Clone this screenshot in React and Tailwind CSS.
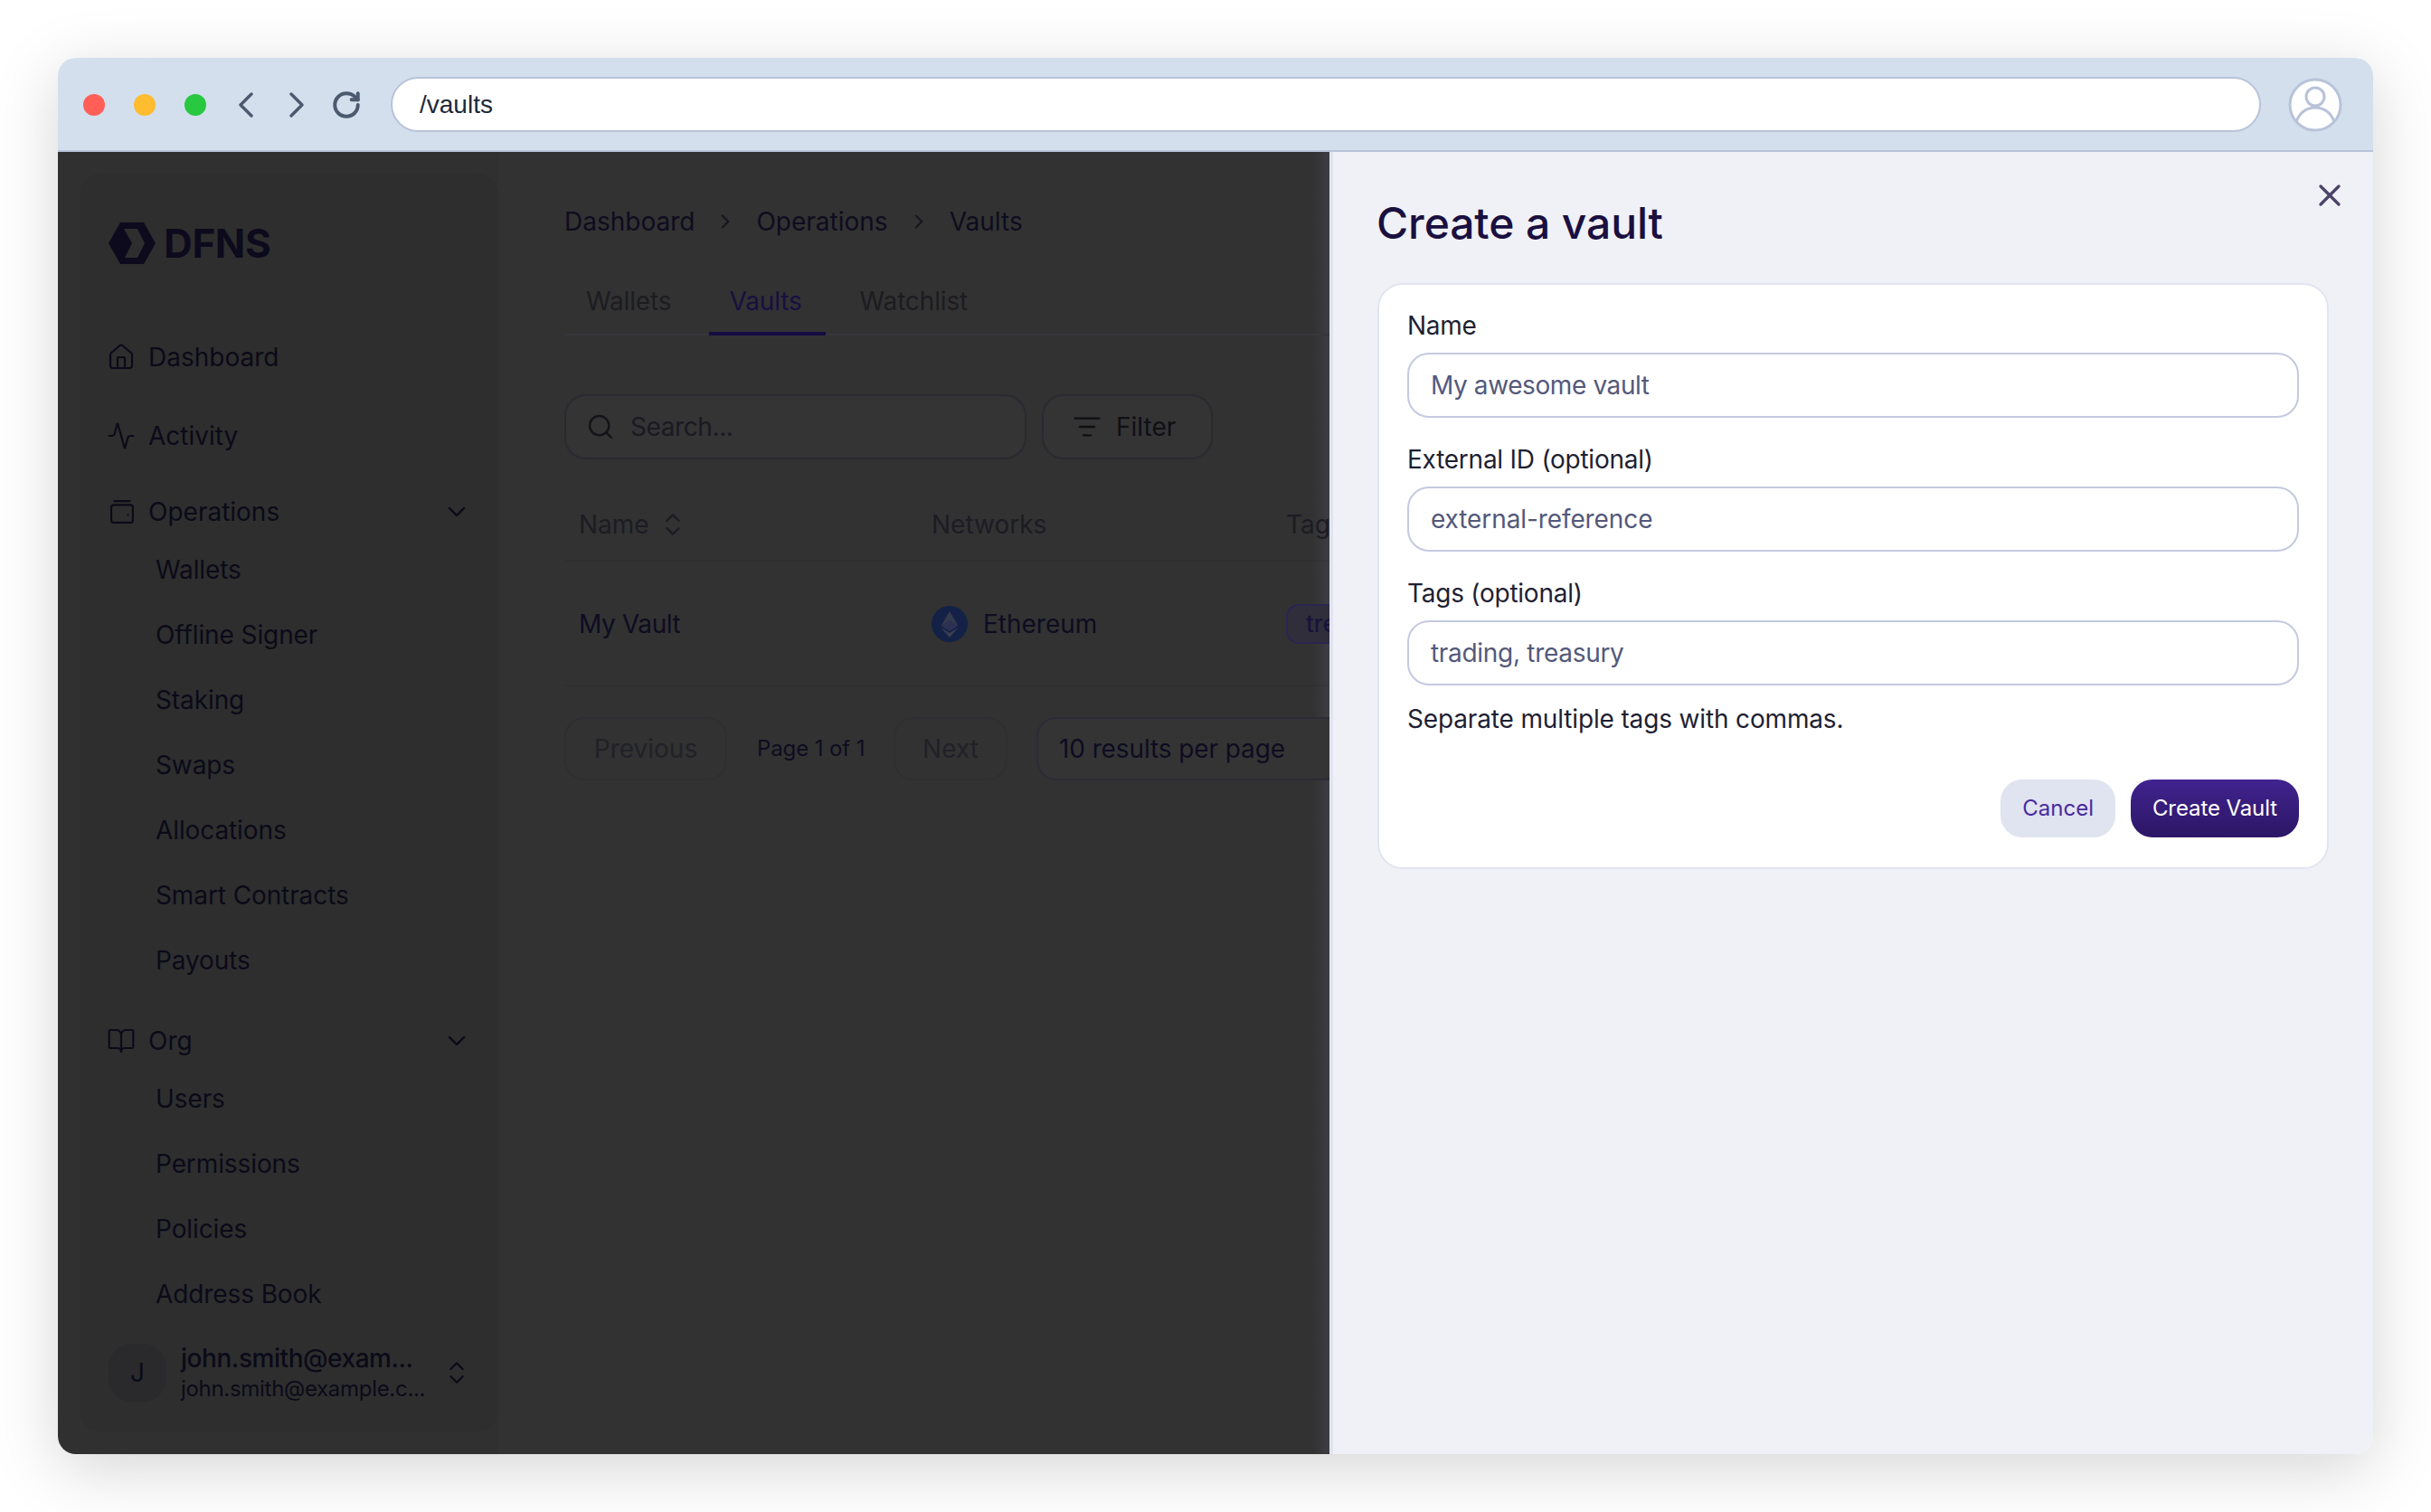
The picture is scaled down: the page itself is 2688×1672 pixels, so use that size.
import { Activity, BookOpen, ChevronDown, ChevronRight, ChevronsUpDown, House, ListFilter, RotateCw, Search, X } from "lucide-react";

function WalletIcon() {
  return (
    <svg viewBox="0 0 24 24" fill="none" stroke="currentColor" strokeWidth="2" strokeLinecap="round" strokeLinejoin="round" className="w-[26px] h-[26px] ml-1 shrink-0">
      <rect x="1" y="5" width="22" height="18" rx="2.5" />
      <path d="M4 1h16" />
      <path d="M18 15h.01" />
    </svg>
  );
}

function Logo() {
  return (
    <div className="flex items-center gap-[9px] text-[#0c0a1c]">
      <svg viewBox="0 0 52 46" className="w-[52px] h-[46px] shrink-0">
        <path fill="currentColor" fillRule="evenodd" d="M13 0h26l13 23-13 23H13L0 23zM17 7h15l8 16-8 16H18l8-16z" />
      </svg>
      <span className="text-[44px] leading-none font-bold tracking-[-0.4px]">DFNS</span>
    </div>
  );
}

function NavItem({ icon, label, chevron, className }) {
  return (
    <div className={`flex items-center h-10 pl-[30px] pr-[30px] ${className}`}>
      <span className="w-[46px] flex items-center shrink-0">{icon}</span>
      <span>{label}</span>
      {chevron && <ChevronDown className="ml-auto w-8 h-8" strokeWidth={1.8} />}
    </div>
  );
}

function SubItem({ label }) {
  return <div className="h-[72px] flex items-center pl-[84px] tracking-[-0.1px]">{label}</div>;
}

function Sidebar() {
  return (
    <aside className="w-[463px] shrink-0 rounded-[24px] bg-[#2e2e2e] text-[#0b0a18] text-[28px] flex flex-col">
      <div className="pt-[54px] pl-[32px] mb-[83px]">
        <Logo />
      </div>
      <NavItem icon={<House className="w-8 h-8" strokeWidth={1.6} />} label="Dashboard" />
      <NavItem className="mt-[47px]" icon={<Activity className="w-8 h-8" strokeWidth={1.6} />} label="Activity" />
      <NavItem className="mt-[44px]" icon={<WalletIcon />} label="Operations" chevron />
      <div className="mt-[8px]">
        {["Wallets", "Offline Signer", "Staking", "Swaps", "Allocations", "Smart Contracts", "Payouts"].map((item) => (
          <SubItem key={item} label={item} />
        ))}
      </div>
      <NavItem className="mt-[33px]" icon={<BookOpen className="w-8 h-8" strokeWidth={1.6} />} label="Org" chevron />
      <div className="mt-[8px]">
        {["Users", "Permissions", "Policies", "Address Book"].map((item) => (
          <SubItem key={item} label={item} />
        ))}
      </div>
      <div className="flex items-center pl-[32px] pr-[30px] mt-[17px]">
        <div className="w-16 h-16 rounded-[26px] bg-[#2a2a2c] flex items-center justify-center shrink-0">J</div>
        <div className="ml-4 min-w-0 whitespace-nowrap">
          <div className="font-[550] leading-9 tracking-[-0.45px]">john.smith@exam...</div>
          <div className="text-[24px] leading-8 tracking-[-0.3px]">john.smith@example.c...</div>
        </div>
        <ChevronsUpDown className="ml-auto w-8 h-8" strokeWidth={1.6} />
      </div>
    </aside>
  );
}

function Breadcrumbs() {
  return (
    <div className="flex items-center text-[28px] leading-10 text-[#0e0c1e]">
      <span>Dashboard</span>
      <ChevronRight className="w-[26px] h-[26px] mx-[21px] text-[#17151f]" strokeWidth={1.8} />
      <span>Operations</span>
      <ChevronRight className="w-[26px] h-[26px] mx-[21px] text-[#17151f]" strokeWidth={1.8} />
      <span>Vaults</span>
    </div>
  );
}

function Tabs() {
  return (
    <div className="flex border-b-[2px] border-[#37373b] text-[28px] text-[#1c1c20] mt-[48px] w-[860px] tracking-[-0.15px]">
      <div className="px-6 pb-[16px] leading-10">Wallets</div>
      <div className="ml-[18px] pl-[22px] pr-[26px] pb-[14px] leading-10 text-[#171040] border-b-[4px] border-[#160c42] -mb-[2px]">Vaults</div>
      <div className="ml-[14px] px-6 pb-[16px] leading-10">Watchlist</div>
    </div>
  );
}

function Toolbar() {
  return (
    <div className="flex gap-[17px] mt-[65px] text-[28px]">
      <div className="w-[511px] h-[72px] rounded-[24px] border-[2px] border-[#2a2a30] bg-[#343435] flex items-center pl-[22px] text-[#1a1a20]">
        <Search className="w-8 h-8 text-[#141418]" strokeWidth={1.8} />
        <span className="ml-[17px] tracking-[-0.4px]">Search...</span>
      </div>
      <div className="w-[189px] h-[72px] rounded-[24px] border-[2px] border-[#2a2a30] bg-[#343435] flex items-center pl-[32px] text-[#0f0f14]">
        <ListFilter className="w-8 h-8" strokeWidth={1.8} />
        <span className="ml-[16px]">Filter</span>
      </div>
    </div>
  );
}

function VaultTable() {
  return (
    <div className="mt-[51px] w-[860px] text-[28px]">
      <div className="grid grid-cols-[390px_392px_1fr] pl-[16px] h-[42px] border-b-[2px] border-black/5 box-content pb-[18px] text-[#1c1c22] leading-[42px]">
        <div className="flex items-center">
          Name
          <ChevronsUpDown className="w-8 h-8 ml-[10px]" strokeWidth={1.8} />
        </div>
        <div>Networks</div>
        <div>Tags</div>
      </div>
      <div className="grid grid-cols-[390px_392px_1fr] pl-[16px] pt-[2px] h-[138px] items-center border-b-[2px] border-black/5 text-[#0e0c20]">
        <div className="tracking-[-0.4px]">My Vault</div>
        <div className="flex items-center gap-[17px]">
          <svg viewBox="0 0 40 40" className="w-10 h-10 shrink-0">
            <circle cx="20" cy="20" r="20" fill="#142147" />
            <path d="M20 6l-9.5 16 9.5-4 9.5 4z" fill="#353a4e" />
            <path d="M20 16l-9.500 6 9.500 6 9.500-6z" fill="#2a3152" />
            <path d="M10.500 24l9.500 11 9.500-11-9.500 6z" fill="#3a3e50" />
          </svg>
          Ethereum
        </div>
        <div>
          <div className="w-[120px] h-[44px] rounded-[14px] border-[2px] border-[#2a2650] bg-[#302e3a] pl-[20px] text-[26px] font-medium leading-[40px] text-[#17133a]">treasury</div>
        </div>
      </div>
    </div>
  );
}

function Pagination() {
  return (
    <div className="flex items-center mt-[34px] w-max text-[28px]">
      <div className="w-[180px] h-[70px] rounded-[22px] border-[2px] border-[#2f2f33] flex items-center justify-center text-[#212127]">Previous</div>
      <div className="ml-[33px] w-[116px] text-[24px] tracking-[-0.1px] whitespace-nowrap text-[#0e0c20]">Page 1 of 1</div>
      <div className="ml-[35px] w-[126px] h-[70px] rounded-[22px] border-[2px] border-[#2f2f33] flex items-center justify-center text-[#212127]">Next</div>
      <div className="ml-[32px] w-[380px] h-[70px] rounded-[22px] border-[2px] border-[#2c2c36] bg-[#343435] flex items-center pl-[23px] text-[#0e0c20] tracking-[-0.1px]">10 results per page</div>
    </div>
  );
}

function Field({ label, value, valueClass }) {
  return (
    <div>
      <div className="text-[28px] leading-8 tracking-[-0.25px] text-[#1f1f33] mb-[14px]">{label}</div>
      <div className={`h-[72px] rounded-[24px] border-[2px] border-[#c5c9e0] bg-white flex items-center px-6 text-[28px] text-[#54597a] ${valueClass}`}>{value}</div>
    </div>
  );
}

function CreateVaultPanel() {
  return (
    <section className="w-[1154px] shrink-0 bg-[#f0f1f6] border-l-[4px] border-[#e0e4f0] pl-[49px] pr-[49px] relative">
      <X className="absolute right-[28px] top-[28px] w-10 h-10 text-[#4b4367]" strokeWidth={2} />
      <h2 className="mt-[43px] -ml-[1px] text-[48px] leading-[72px] font-medium tracking-[-0.1px] text-[#1a1040]">Create a vault</h2>
      <div className="mt-[30px] rounded-[28px] border-[2px] border-[#e2e5f0] bg-white px-[31px] pt-[29px] pb-[33px]">
        <div className="flex flex-col gap-[30px]">
          <Field label="Name" value="My awesome vault" valueClass="tracking-[-0.4px]" />
          <Field label="External ID (optional)" value="external-reference" valueClass="tracking-[-0.1px]" />
          <Field label="Tags (optional)" value="trading, treasury" valueClass="tracking-[-0.3px]" />
        </div>
        <p className="mt-[17px] text-[28px] leading-10 tracking-[-0.15px] text-[#1f1f33]">Separate multiple tags with commas.</p>
        <div className="flex justify-end gap-[17px] mt-[47px]">
          <button className="h-16 px-6 rounded-[24px] bg-[#e0e3f0] text-[24px] text-[#4a2a9e]">Cancel</button>
          <button className="h-16 px-6 rounded-[24px] bg-gradient-to-b from-[#41238f] to-[#2c1665] text-[24px] tracking-[-0.1px] text-white">Create Vault</button>
        </div>
      </div>
    </section>
  );
}

export default function App() {
  return (
    <div className="w-[2688px] h-[1672px] bg-white p-16 font-['Inter',sans-serif]">
      <div className="h-[1544px] rounded-[20px] overflow-hidden shadow-[0_16px_72px_rgba(0,0,0,0.17)] flex flex-col">
        <header className="h-[104px] shrink-0 bg-[#d3dfed] border-b-[2px] border-[#b8c3d9] flex items-center pt-[1px] pl-7 pr-[34px]">
          <div className="flex gap-8">
            <span className="w-6 h-6 rounded-full bg-[#ff5f57]" />
            <span className="w-6 h-6 rounded-full bg-[#febc2e]" />
            <span className="w-6 h-6 rounded-full bg-[#28c840]" />
          </div>
          <svg viewBox="0 0 16 28" fill="none" stroke="#4b5a6e" strokeWidth="3.4" strokeLinecap="round" strokeLinejoin="round" className="w-4 h-7 ml-9">
            <path d="M14 2 2 14l12 12" />
          </svg>
          <svg viewBox="0 0 16 28" fill="none" stroke="#4b5a6e" strokeWidth="3.4" strokeLinecap="round" strokeLinejoin="round" className="w-4 h-7 ml-10">
            <path d="M2 2l12 12L2 26" />
          </svg>
          <RotateCw className="w-[34px] h-[34px] ml-[30px] text-[#4b5a6e]" strokeWidth={2.8} />
          <div className="ml-8 flex-1 h-[61px] rounded-full bg-white border-[2px] border-[#b8c3d9] flex items-center pl-[30px] font-['Liberation_Sans'] text-[28px] text-[#1f2937]">/vaults</div>
          <svg viewBox="0 0 60 60" fill="none" stroke="#b8c3d9" strokeWidth="3" className="w-[60px] h-[60px] ml-[30px]">
            <circle cx="30" cy="30" r="28" fill="#fff" />
            <circle cx="30" cy="21" r="10" />
            <path d="M9 49c3-10 11-16 21-16s18 6 21 16" />
          </svg>
        </header>
        <div className="flex-1 flex min-h-0">
          <div className="flex-1 min-w-0 bg-[#303030] overflow-hidden flex pt-6 pb-[25px] pl-6">
            <Sidebar />
            <main className="pl-[73px] pt-[33px] bg-gradient-to-r from-[#323232] from-[98%] to-[#3d3d45] -mt-6 -mb-[25px] flex-1 min-w-0">
              <div className="mt-6">
                <Breadcrumbs />
                <Tabs />
                <Toolbar />
                <VaultTable />
                <Pagination />
              </div>
            </main>
          </div>
          <CreateVaultPanel />
        </div>
      </div>
    </div>
  );
}
